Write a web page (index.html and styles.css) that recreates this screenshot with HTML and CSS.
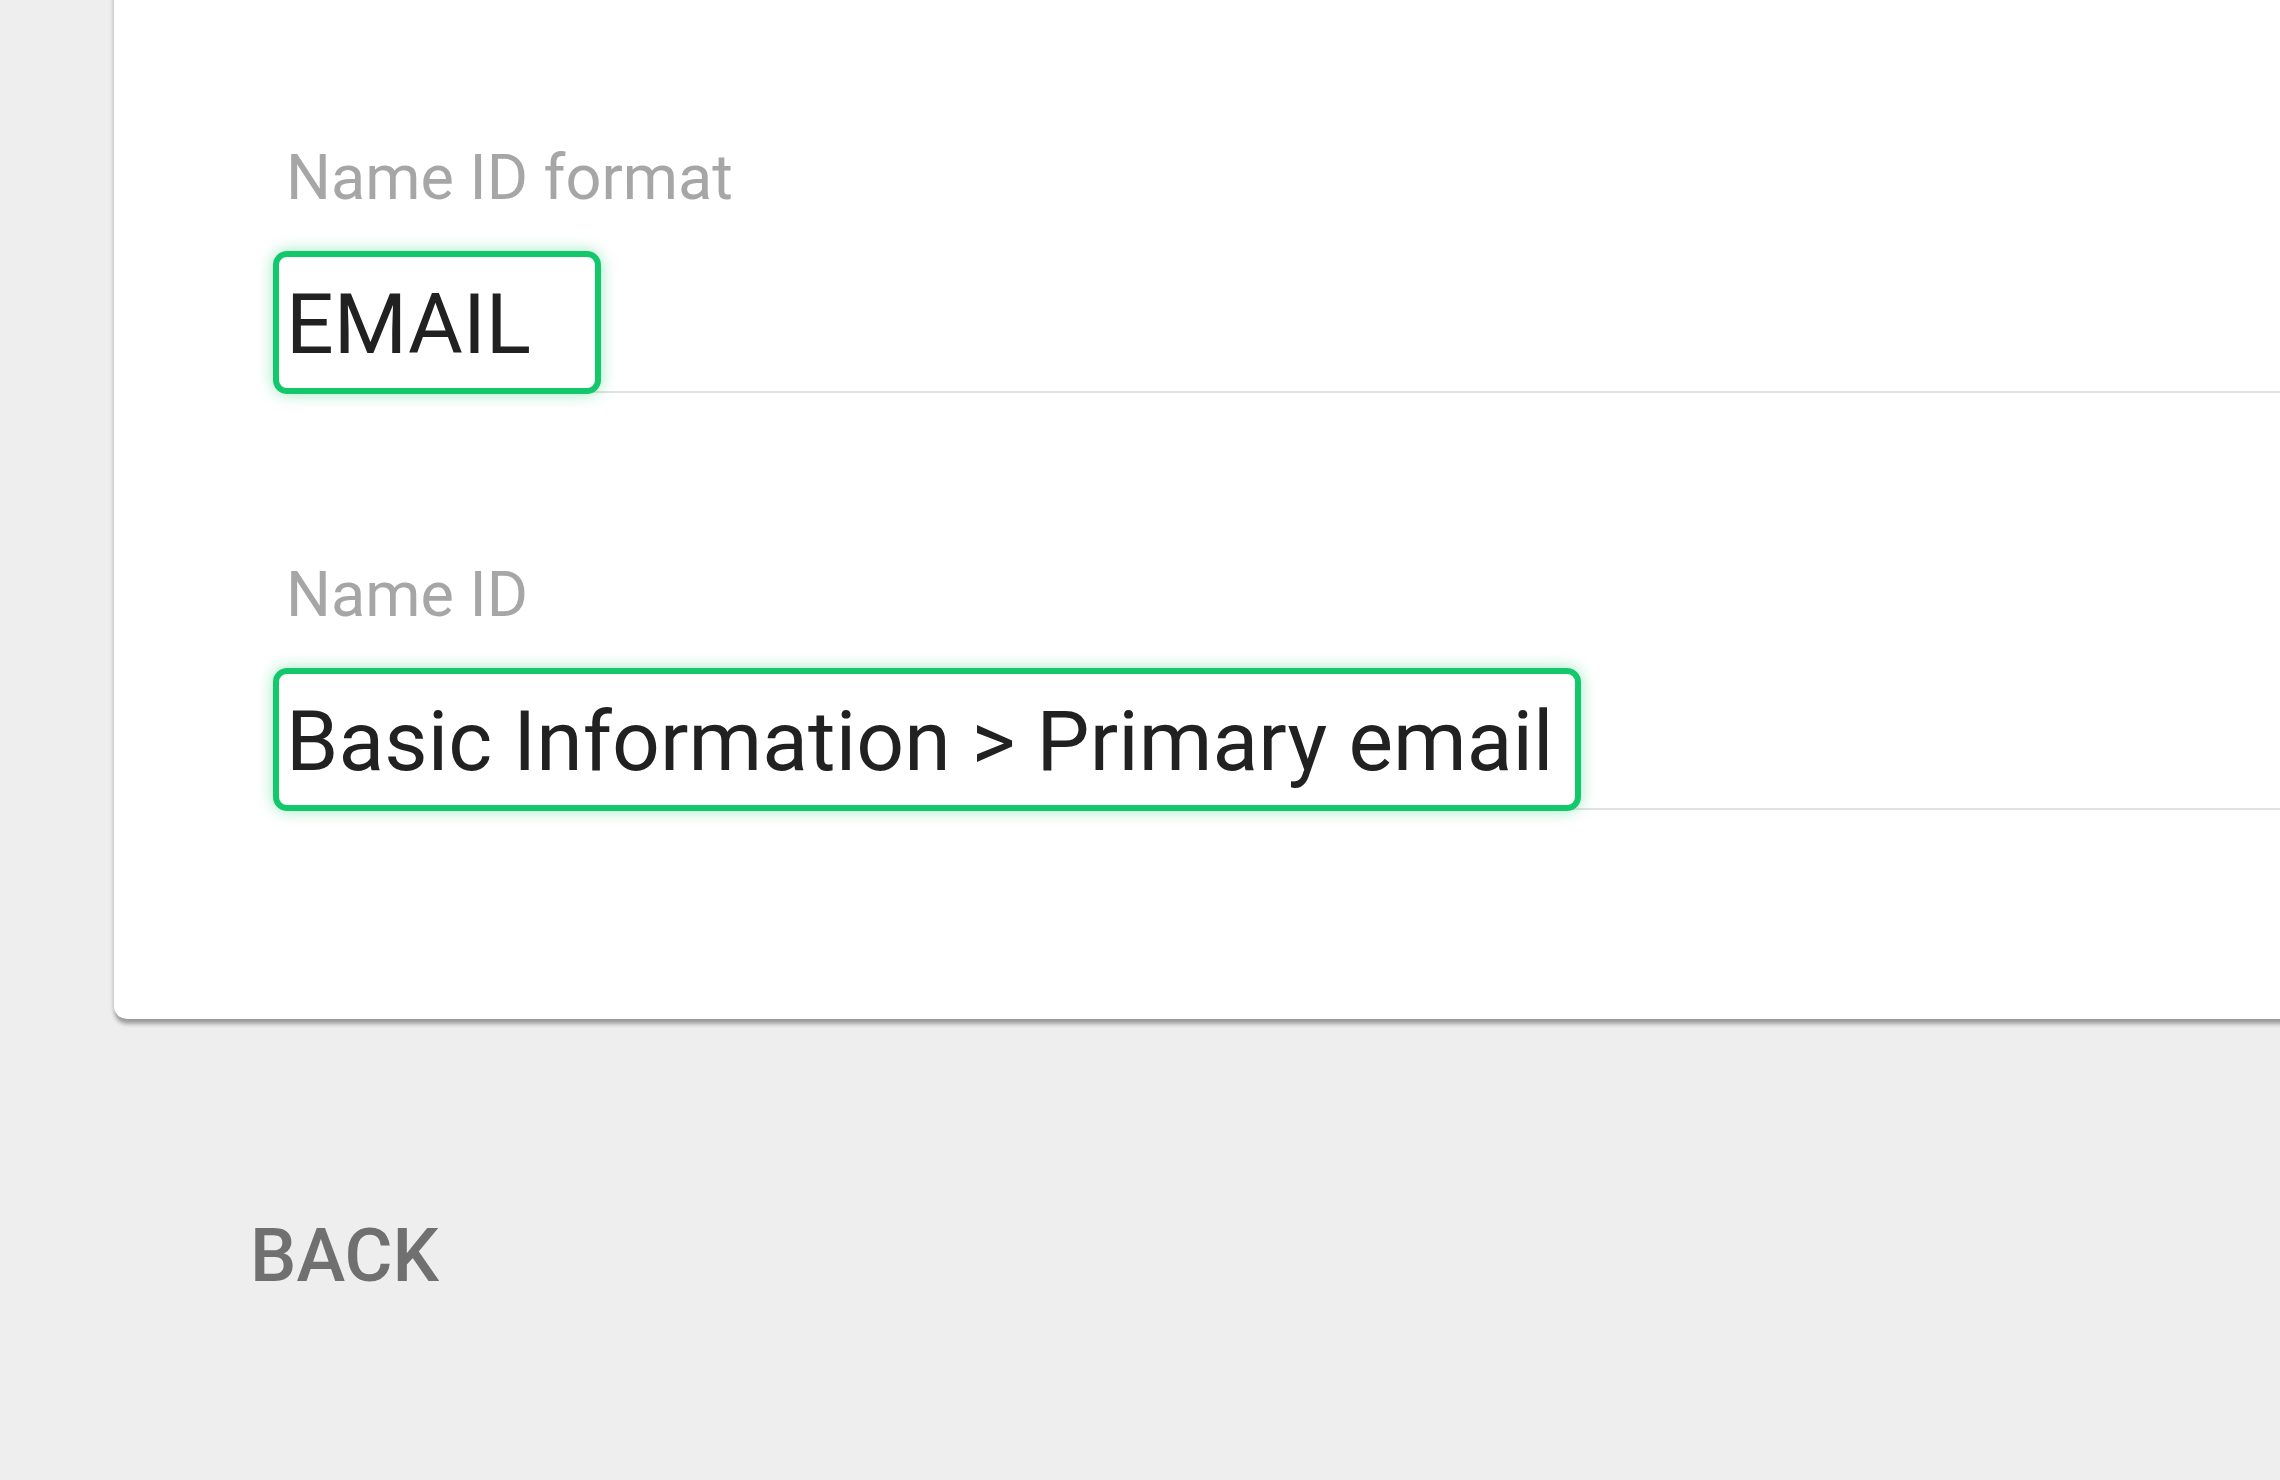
FILE: index.html
```html
<!DOCTYPE html>
<html lang="en">
<head>
<meta charset="utf-8">
<title>SAML Name ID</title>
<link rel="stylesheet" href="styles.css">
</head>
<body>
<div class="page">
  <section class="card">
    <div class="field">
      <label class="field-label">Name ID format</label>
      <div class="field-input">
        <span class="field-value">EMAIL</span>
        <span class="highlight highlight-format"></span>
      </div>
    </div>
    <div class="field">
      <label class="field-label">Name ID</label>
      <div class="field-input">
        <span class="field-value">Basic Information &gt; Primary email</span>
        <span class="highlight highlight-id"></span>
      </div>
    </div>
  </section>
  <div class="actions">
    <button class="btn-back" type="button">BACK</button>
  </div>
</div>
</body>
</html>
```

FILE: styles.css
```css
html, body {
  margin: 0;
  padding: 0;
  background: #eeeeee;
  overflow: hidden;
  width: 2280px;
  height: 1480px;
}

.page {
  padding-left: 114px;
  font-family: Roboto, "Liberation Sans", sans-serif;
}

.card {
  margin-top: -20px;
  margin-right: -60px;
  padding: 161px 0 209px 172px;
  background: #ffffff;
  border-radius: 0 0 0 13px;
  box-shadow: 0 6px 4px -1px rgba(0, 0, 0, 0.32), 0 0 6px rgba(0, 0, 0, 0.12);
  display: flex;
  flex-direction: column;
  gap: 165px;
}

.field {
  display: flex;
  flex-direction: column;
}

.field-label {
  font-size: 63px;
  line-height: 74px;
  color: #a6a6a6;
}

.field-input {
  position: relative;
  margin-top: 61px;
  padding-bottom: 17px;
  border-bottom: 2px solid #e2e2e2;
}

.field-value {
  display: block;
  font-size: 84px;
  line-height: 98px;
  color: #212121;
  white-space: nowrap;
  letter-spacing: 0.1px;
}

.highlight {
  position: absolute;
  top: -25px;
  left: -13px;
  height: 143px;
  box-sizing: border-box;
  border: 6px solid #12c86b;
  border-radius: 14px;
  box-shadow: 0 0 16px rgba(18, 200, 107, 0.4);
  pointer-events: none;
}

.highlight-format {
  width: 328px;
}

.highlight-id {
  width: 1308px;
}

.actions {
  padding-left: 136px;
  margin-top: 200px;
}

.btn-back {
  font-family: Roboto, "Liberation Sans", sans-serif;
  font-weight: 500;
  font-size: 73.5px;
  line-height: 74px;
  color: #707070;
  background: transparent;
  border: 0;
  padding: 0;
  margin: 0;
}
```
